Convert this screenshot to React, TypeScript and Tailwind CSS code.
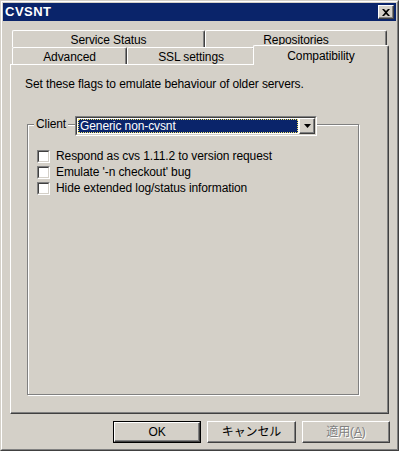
import React from "react";

const raised =
  "border border-t-white border-l-white border-r-[#404040] border-b-[#404040] shadow-[inset_-1px_-1px_0_#808080]";

function Tab({ label, w }: { label: string; w: string }) {
  return (
    <div
      className={`${w} h-full flex items-center justify-center border-l border-t border-r border-l-white border-t-white border-r-[#404040] shadow-[inset_-1px_0_0_#808080] rounded-tl-[2px] rounded-tr-[2px] text-black`}
    >
      <span className="pt-[1px]">{label}</span>
    </div>
  );
}

function Checkbox({ label }: { label: string }) {
  return (
    <div className="flex items-center h-[16px]">
      <div className="w-[13px] h-[13px] border border-t-[#808080] border-l-[#808080] border-r-white border-b-white">
        <div className="w-full h-full bg-white border border-t-[#404040] border-l-[#404040] border-r-[#d4d0c8] border-b-[#d4d0c8]" />
      </div>
      <span className="ml-[6px] leading-[14px]">{label}</span>
    </div>
  );
}

function Button({ children, def, w }: { children: React.ReactNode; def?: boolean; w: string }) {
  const inner = (
    <div className={`w-full h-full ${raised} flex items-center justify-center`}>
      {children}
    </div>
  );
  return (
    <div className={`${w} h-[22px] ${def ? "border border-black" : ""}`}>{inner}</div>
  );
}

export default function App() {
  return (
    <div className="w-[399px] h-[451px] bg-[#d4d0c8] border border-t-[#d4d0c8] border-l-[#d4d0c8] border-r-[#404040] border-b-[#404040] font-[family-name:'Liberation_Sans','Noto_Sans_CJK_JP',sans-serif] text-[12px] tracking-[-0.1px] text-black">
      <div className="h-full border border-t-white border-l-white border-r-[#808080] border-b-[#808080] p-px flex flex-col">
        {/* title bar */}
        <div className="h-[18px] bg-[#0a246a] flex items-center justify-between pl-[2px] pr-[2px]">
          <span className="text-white font-bold text-[13px] leading-[18px] tracking-[0.5px]">CVSNT</span>
          <div className={`w-[16px] h-[14px] bg-[#d4d0c8] ${raised} flex items-center justify-center`}>
            <svg width="8" height="7" viewBox="0 0 8 7">
              <path d="M0 0h2l2 2 2-2h2L5 3.5 8 7H6L4 5 2 7H0l3-3.5z" fill="black" />
            </svg>
          </div>
        </div>

        {/* tabs + panel */}
        <div className="ml-[7px] mt-[9px] w-[379px] flex flex-col">
          <div className="flex h-[17px] pl-[2px]">
            <Tab label="Service Status" w="w-[193px]" />
            <Tab label="Repositories" w="w-[182px]" />
          </div>
          <div className="flex h-[17px] pl-[2px] relative z-10">
            <Tab label="Advanced" w="w-[115px]" />
            <Tab label="SSL settings" w="w-[128px]" />
            <div className="w-[136px] -ml-[2px] -mt-[2px] h-[20px] bg-[#d4d0c8] flex items-start justify-center border-l border-t border-r border-l-white border-t-white border-r-[#404040] shadow-[inset_-1px_0_0_#808080] rounded-tl-[2px] rounded-tr-[2px]">
              <span className="pt-[1px]">Compatibility</span>
            </div>
          </div>
          <div className="h-[350px] border border-t-white border-l-white border-r-[#404040] border-b-[#404040] shadow-[inset_-1px_-1px_0_#808080] pl-[14px] pt-[12px]">
            <div className="leading-[14px]">Set these flags to emulate behaviour of older servers.</div>
            <div className="relative ml-[2px] mt-[33px] w-[332px] h-[271px] border border-[#808080] shadow-[inset_1px_1px_0_white,1px_1px_0_white]">
              <div className="absolute -top-[8px] left-[6px] flex items-center h-[14px]">
                <span className="bg-[#d4d0c8] px-[2px] leading-[14px]">Client</span>
              </div>
              <div className="absolute -top-[9px] left-[47px] w-[242px] h-[20px] bg-white border border-t-[#808080] border-l-[#808080] border-r-white border-b-white">
                <div className="w-full h-full border border-t-[#404040] border-l-[#404040] border-r-[#d4d0c8] border-b-[#d4d0c8] flex">
                  <div className="flex-1 p-px">
                    <div className="h-full bg-[#0a246a] border border-dotted border-[#f2e36a] text-white flex items-center pl-[1px] leading-[14px]">
                      Generic non-cvsnt
                    </div>
                  </div>
                  <div className={`w-[16px] h-full bg-[#d4d0c8] ${raised} flex items-center justify-center`}>
                    <svg width="7" height="4" viewBox="0 0 7 4">
                      <path d="M0 0h7L3.5 4z" fill="black" />
                    </svg>
                  </div>
                </div>
              </div>
              <div className="pl-[9px] pt-[23px] flex flex-col">
                <Checkbox label="Respond as cvs 1.11.2 to version request" />
                <Checkbox label="Emulate '-n checkout' bug" />
                <Checkbox label="Hide extended log/status information" />
              </div>
            </div>
          </div>
        </div>

        {/* buttons */}
        <div className="flex mt-[7px] ml-[110px] gap-[6px]">
          <Button def w="w-[88px]">OK</Button>
          <Button w="w-[89px]">キャンセル</Button>
          <Button w="w-[88px]">
            <span className="text-[#808080] [text-shadow:1px_1px_0_white]">
              適用(<span className="underline">A</span>)
            </span>
          </Button>
        </div>
      </div>
    </div>
  );
}
